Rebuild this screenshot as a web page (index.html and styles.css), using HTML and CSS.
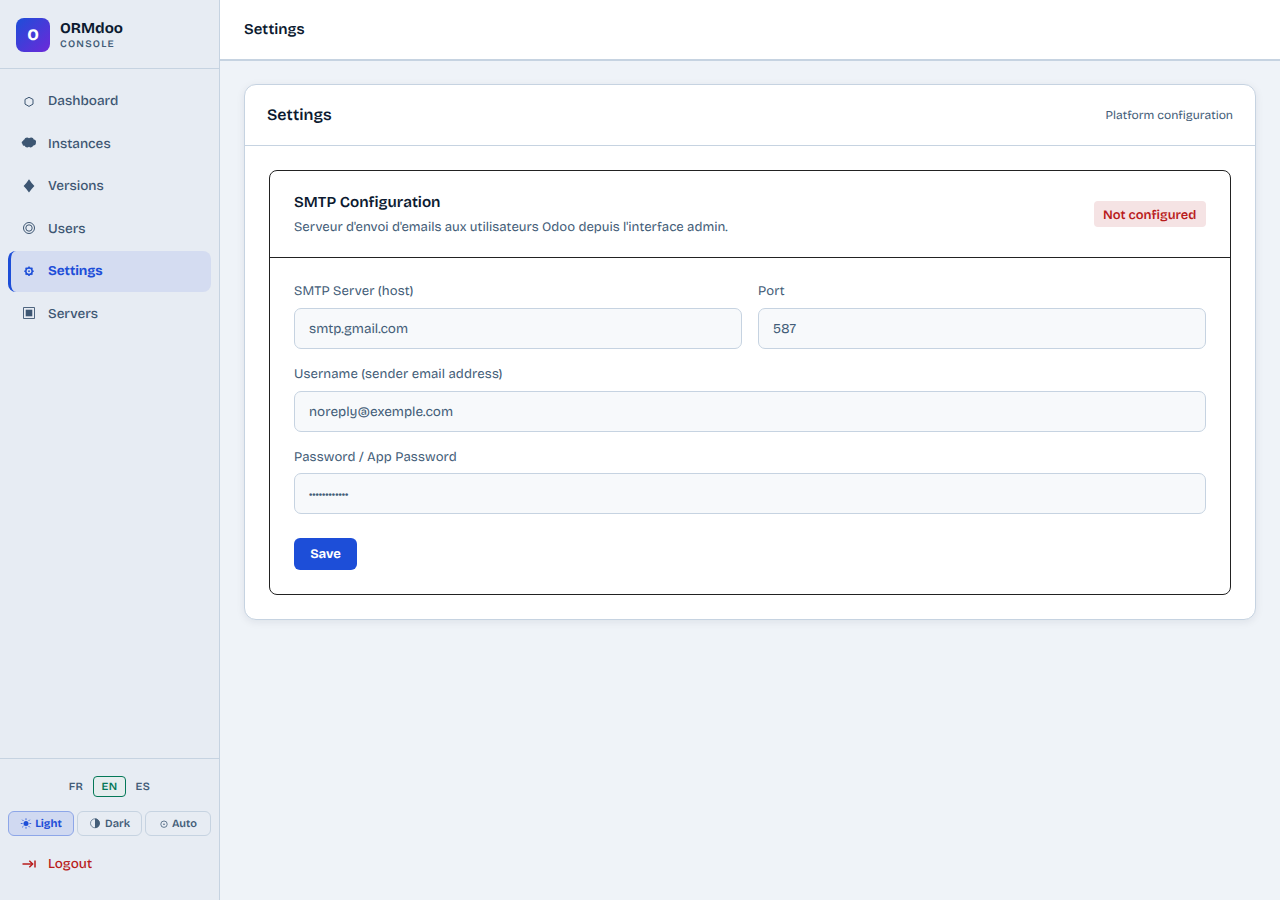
FILE: index.html
```html
<!DOCTYPE html>
<html lang="en">
<head>
<meta charset="utf-8">
<title>Settings</title>
<link rel="stylesheet" href="styles.css">
</head>
<body>
<div class="app">
  <aside class="sidebar">
    <div class="brand">
      <div class="logo">O</div>
      <div class="brand-text"><div class="brand-name"><span>ORMdoo</span></div><div class="brand-sub"><span>CONSOLE</span></div></div>
    </div>
    <nav class="nav">
      <a class="item"><svg class="ico" viewBox="0 0 18 18"><path d="M9 5.3 13 7.4V12.1L9 14.4 5 12.1V7.4Z" fill="none" stroke="currentColor"/></svg><span>Dashboard</span></a>
      <a class="item"><svg class="ico" viewBox="0 0 18 18"><path d="M4.4 5.6C4.8 3.4 7.6 2.8 9 4.3C10.6 2.8 13.4 3.2 13.7 5.5C15.4 5.6 16.6 7.2 15.9 8.8C16 10.6 14.9 11.6 13.4 11.6C12.6 13.6 10 13.8 9 12.8C7.7 14 5.2 13.6 4.8 11.8C3.4 12 2.2 11.2 2.6 10C1.2 9.3 1.5 7.1 3 6.9C3.2 6.2 3.7 5.8 4.4 5.6Z" fill="currentColor"/></svg><span>Instances</span></a>
      <a class="item"><svg class="ico" viewBox="0 0 18 18"><path d="M9 2.2Q11 5.5 14.4 8.9Q11 12.3 9 15.6Q7 12.3 3.6 8.9Q7 5.5 9 2.2Z" fill="currentColor"/></svg><span>Versions</span></a>
      <a class="item"><svg class="ico" viewBox="0 0 18 18" fill="none" stroke="currentColor"><circle cx="9" cy="9" r="5.5"/><circle cx="9" cy="9" r="3.2"/></svg><span>Users</span></a>
      <a class="item active"><svg class="ico" viewBox="0 0 18 18" fill="none" stroke="currentColor"><circle cx="9" cy="9.2" r="3.2" stroke-width="1.5"/><path d="M12.2 9.2H13.7M4.3 9.2H5.8M9 4.5V6M9 12.4V13.9M11.3 6.9 12.4 5.8M5.6 12.6 6.7 11.5M11.3 11.5 12.4 12.6M5.6 5.8 6.7 6.9" stroke-width="1.5"/><circle cx="9" cy="9.2" r=".9" fill="currentColor" stroke="none"/></svg><span>Settings</span></a>
      <a class="item"><svg class="ico" viewBox="0 0 18 18"><path d="M3.5 3.5H14.5V14.5H3.5Z" fill="none" stroke="currentColor" stroke-width=".9"/><path d="M5.7 5.7H12.3V12.3H5.7Z" fill="currentColor"/></svg><span>Servers</span></a>
    </nav>
    <div class="side-foot">
      <div class="langs"><span class="lang">FR</span><span class="lang on">EN</span><span class="lang">ES</span></div>
      <div class="themes">
        <button class="theme on"><svg viewBox="0 0 12 12"><circle cx="6" cy="5.5" r="2.5" fill="currentColor"/><path d="M6 .3V2.1M6 8.9V10.7M.8 5.5H2.6M9.4 5.5H11.2M2.2 1.7 3.5 3M8.5 8 9.8 9.3M9.8 1.7 8.5 3M3.5 8 2.2 9.3" stroke="currentColor" stroke-width=".8"/></svg><span>Light</span></button>
        <button class="theme dark"><svg viewBox="0 0 12 12"><circle cx="6" cy="5.3" r="4.5" fill="none" stroke="currentColor" stroke-width=".7"/><path d="M6 .5A4.8 4.8 0 0 1 6 10.1Z" fill="currentColor"/></svg><span>Dark</span></button>
        <button class="theme auto"><svg viewBox="0 0 12 12"><circle cx="6" cy="6.2" r="3.2" fill="none" stroke="currentColor" stroke-width=".8"/><circle cx="6" cy="6.2" r=".8" fill="currentColor"/></svg><span>Auto</span></button>
      </div>
      <a class="item logout"><svg class="ico" viewBox="0 0 18 18" fill="none" stroke="currentColor" stroke-width="1.5"><path d="M2.5 9H12.5M15 5.5V12.5"/><path d="M9.3 5.8 12.7 9 9.3 12.2" stroke-width="1.4"/></svg><span>Logout</span></a>
    </div>
  </aside>
  <div class="main">
    <header class="topbar"><span>Settings</span></header>
    <main class="content">
      <section class="card">
        <div class="card-head"><h1><span>Settings</span></h1><span class="hint">Platform configuration</span></div>
        <div class="card-body">
          <div class="panel">
            <div class="panel-head">
              <div><h2><span>SMTP Configuration</span></h2><p><span>Serveur d'envoi d'emails aux utilisateurs Odoo depuis l'interface admin.</span></p></div>
              <span class="badge">Not configured</span>
            </div>
            <div class="form">
              <div class="row">
                <div class="field"><label>SMTP Server (host)</label><div class="input"><span>smtp.gmail.com</span></div></div>
                <div class="field"><label>Port</label><div class="input"><span>587</span></div></div>
              </div>
              <div class="field"><label>Username (sender email address)</label><div class="input"><span>noreply@exemple.com</span></div></div>
              <div class="field last"><label>Password / App Password</label><div class="input"><span>••••••••••••</span></div></div>
              <button class="save">Save</button>
            </div>
          </div>
        </div>
      </section>
    </main>
  </div>
</div>
</body>
</html>
```
FILE: styles.css
```css
* { box-sizing: border-box; margin: 0; padding: 0; }
body { font-family: "Bricolage Grotesque", Inter, "Liberation Sans", sans-serif; text-rendering: geometricPrecision; font-size: 13.5px; background: #eff3f8; color: #0c1a30; }
button { font-family: inherit; text-rendering: inherit; }
.app { display: flex; height: 900px; }
.sidebar { width: 220px; flex: none; display: flex; flex-direction: column; background: #e7ecf3; border-right: 1px solid #c6d3e1; }
.brand { height: 69px; padding: 1px 16px 0; display: flex; align-items: center; gap: 10px; border-bottom: 1px solid #c6d3e1; }
.logo { width: 34px; height: 34px; border-radius: 8px; background: linear-gradient(135deg, #1d4ed8, #6d28d9); color: #fff; font-weight: 800; font-size: 16px; line-height: 35px; text-align: center; }
.brand-name { font-weight: 700; font-size: 15px; line-height: 18px; }
.brand-sub { font-weight: 600; font-size: 10px; line-height: 12px; letter-spacing: 1.2px; color: #435d78; }
.nav { flex: 1; padding: 12px 8px; display: flex; flex-direction: column; gap: 2px; }
.item { height: 40.5px; display: flex; align-items: center; gap: 10px; padding: 0 12px 1px 9px; border-left: 3px solid transparent; border-radius: 8px; font-weight: 500; font-size: 13.5px; color: #3d5672; }
.ico { width: 18px; height: 18px; flex: none; }
.item.active { background: #d4dcf1; border-left-color: #1d4ed8; color: #1d4ed8; font-weight: 700; letter-spacing: -.08px; }
.side-foot { height: 142px; border-top: 1px solid #c6d3e1; padding: 17px 8px 0; }
.langs { display: flex; justify-content: center; gap: 2px; height: 21px; }
.lang { padding: 0 7px; border: 1px solid transparent; border-radius: 4px; font-weight: 600; font-size: 11px; line-height: 19px; letter-spacing: .5px; color: #435d78; }
.lang.on { color: #047857; border-color: #047857; background: #e5edee; }
.themes { display: grid; grid-template-columns: 66px 65px 66px; gap: 3px; margin: 14px 0 8px; }
.theme { height: 25px; display: flex; align-items: center; justify-content: center; gap: 3px; border: 1px solid #c6d3e1; border-radius: 6px; background: transparent; color: #435d78; font-size: 11px; font-weight: 600; }
.theme svg { width: 12px; height: 12px; }
.theme.on { background: #d0d9f1; border-color: #8da6e8; color: #1d4ed8; font-weight: 700; }
.theme.dark { gap: 4px; }
.theme.auto { gap: 2px; padding-right: 1px; }
.logout { color: #b91c1c; }
.main { flex: 1; display: flex; flex-direction: column; }
.topbar { height: 61px; display: flex; align-items: center; padding: 0 24px; background: #fff; border-bottom: 2px solid #c6d3e1; font-weight: 600; font-size: 15px; }
.content { padding: 23px 24px; }
.card { height: 536px; background: #fff; border: 1px solid #c6d3e1; border-radius: 12px; box-shadow: 0 2px 8px rgba(15, 31, 51, .08); }
.card-head { height: 61px; padding: 1px 22px 0; display: flex; align-items: center; justify-content: space-between; border-bottom: 1px solid #c6d3e1; }
h1 { font-size: 16px; font-weight: 600; }
.hint { font-size: 12px; color: #435d78; }
.card-body { padding: 24px; }
.panel { height: 425px; border: 1px solid #222; border-radius: 8px; }
.panel-head { height: 87px; padding: 0 24px; display: flex; align-items: center; justify-content: space-between; border-bottom: 1px solid #222; }
h2 { font-size: 15.2px; line-height: 22px; font-weight: 600; padding-top: 1px; }
.panel-head p { font-size: 13.14px; line-height: 20px; margin-top: 3px; color: #435d78; }
.badge { width: 112px; height: 26px; line-height: 29px; padding-left: 9px; white-space: nowrap; border-radius: 4px; background: #f5e3e4; color: #b91c1c; font-size: 12.85px; font-weight: 600; }
.form { padding: 24px; }
.row { display: grid; grid-template-columns: 1fr 1fr; gap: 16px; }
.field { height: 67px; margin-bottom: 15.7px; }
label { display: block; height: 26px; line-height: 18px; font-size: 13.14px; letter-spacing: .08px; color: #435d78; }
.last label { padding-top: .6px; }
.input { height: 41px; display: flex; align-items: center; padding: 0 14px; border: 1px solid #c6d3e1; border-radius: 7px; background: #f7f9fb; font-size: 13.5px; color: #435d78; }
.save { display: block; width: 63px; height: 32px; margin-top: 24px; border: 0; border-radius: 6px; background: #1d4ed8; color: #fff; font-weight: 700; font-size: 13px; }
```
